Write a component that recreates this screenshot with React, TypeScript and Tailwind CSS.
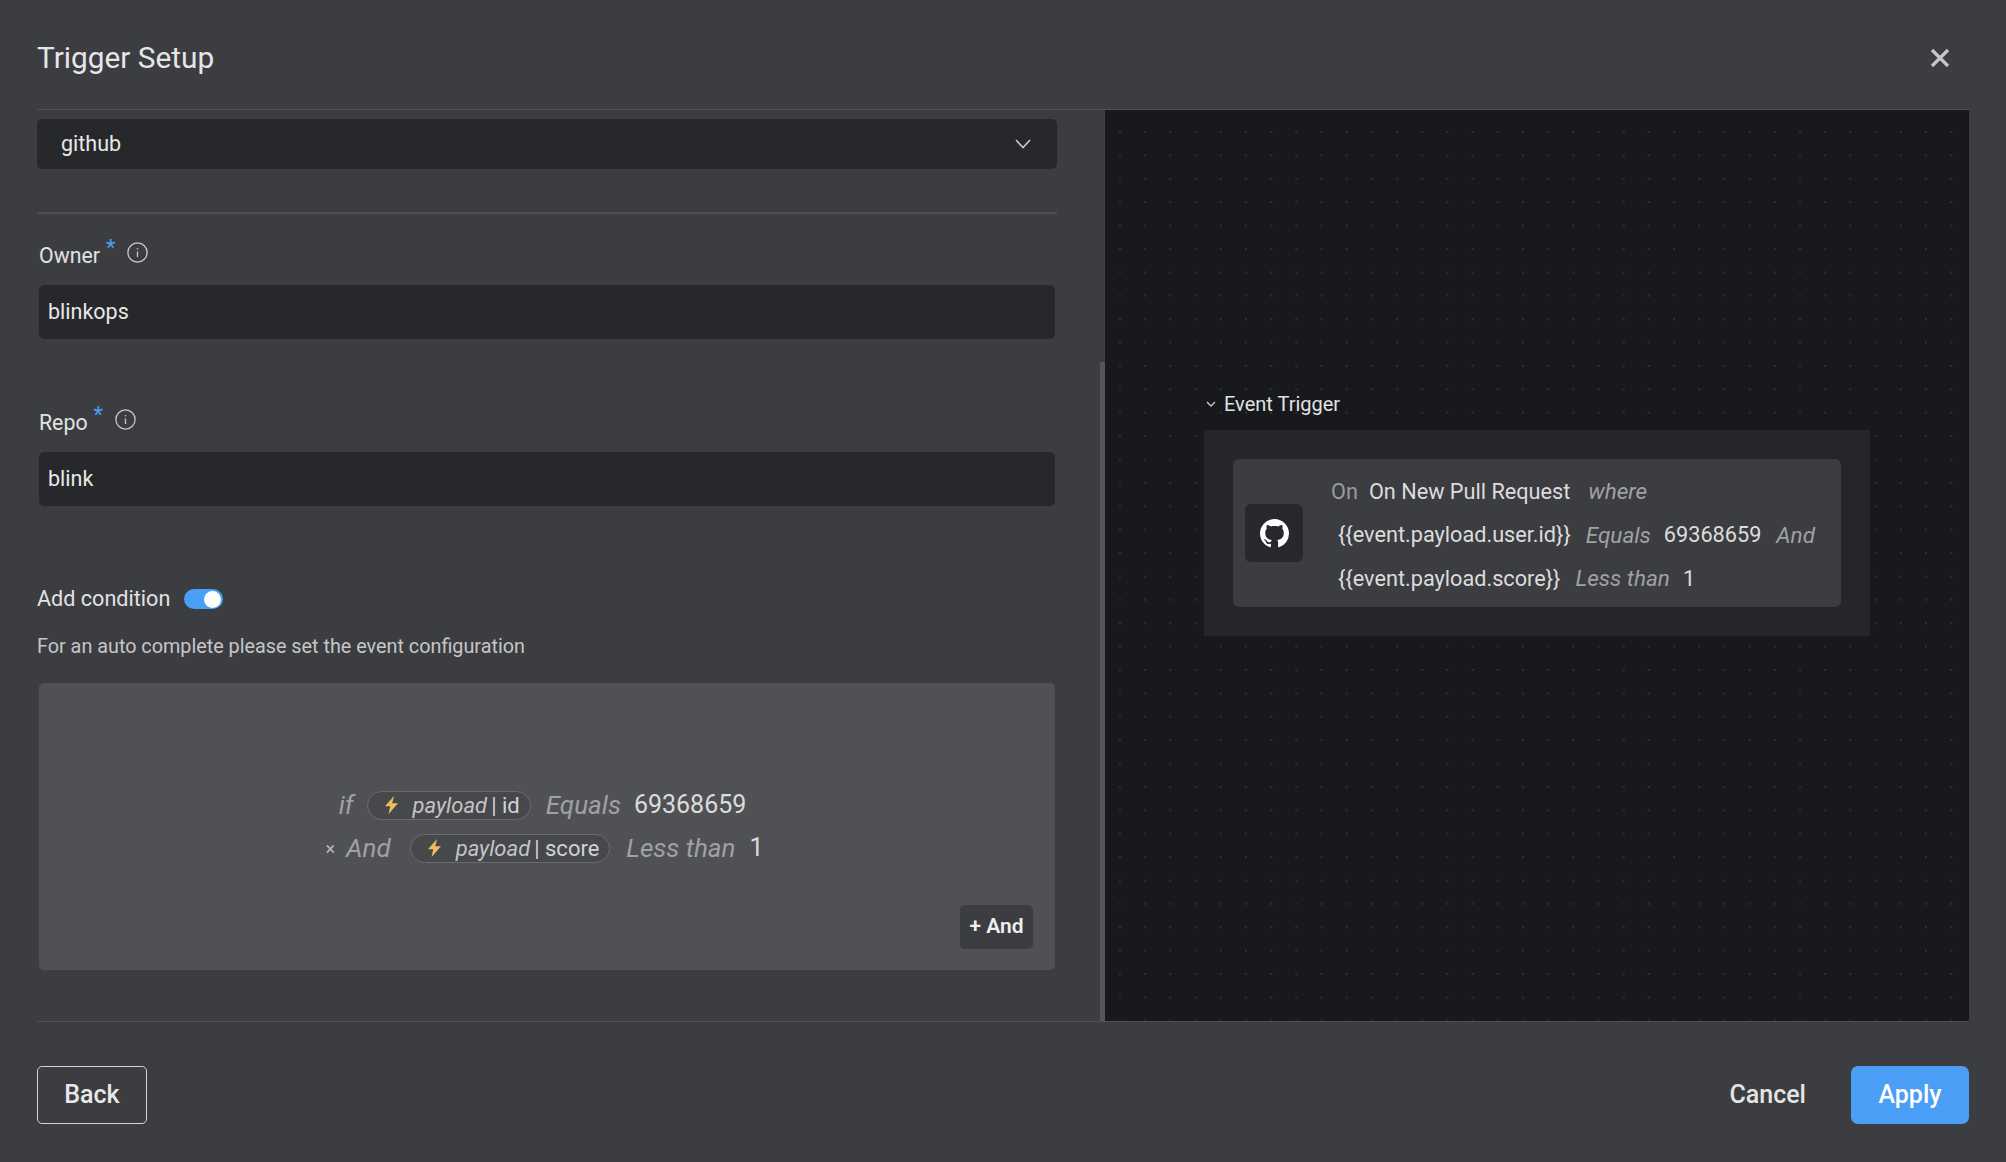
import * as React from "react";

const GITHUB_MARK =
  "M8 0C3.58 0 0 3.58 0 8c0 3.54 2.29 6.53 5.47 7.59.4.07.55-.17.55-.38 0-.19-.01-.82-.01-1.49-2.01.37-2.53-.49-2.69-.94-.09-.23-.48-.94-.82-1.13-.28-.15-.68-.52-.01-.53.63-.01 1.08.58 1.23.82.72 1.21 1.87.87 2.33.66.07-.52.28-.87.51-1.07-1.78-.2-3.64-.89-3.64-3.95 0-.87.31-1.59.82-2.15-.08-.2-.36-1.02.08-2.12 0 0 .67-.21 2.2.82.64-.18 1.32-.27 2-.27.68 0 1.36.09 2 .27 1.53-1.04 2.2-.82 2.2-.82.44 1.1.16 1.92.08 2.12.51.56.82 1.27.82 2.15 0 3.07-1.87 3.75-3.65 3.95.29.25.54.73.54 1.48 0 1.07-.01 1.93-.01 2.2 0 .21.15.46.55.38A8.013 8.013 0 0016 8c0-4.42-3.58-8-8-8z";

const InfoIcon: React.FC = () => (
  <svg width="21" height="21" viewBox="0 0 21 21" fill="none" stroke="#c9c9cb" strokeWidth="1.3">
    <circle cx="10.5" cy="10.5" r="9.6" />
    <path d="M10.5 9.5v5.5" />
    <path d="M10.5 6v1.4" />
  </svg>
);

const Bolt: React.FC = () => (
  <svg width="15" height="18" viewBox="0 0 15 18" fill="#eebd62">
    <path d="M10 0 1 10.2h5.2L4.6 18 14 7.2H8.2z" />
  </svg>
);

const FieldLabel: React.FC<{ label: string }> = ({ label }) => (
  <div className="flex h-[30px] items-center pl-[2px]">
    <span className="mt-[2px] text-[21.3px] text-[#e2e2e3]">{label}</span>
    <span className="ml-[6px] -mt-[15px] text-[22px] leading-none text-[#4b9ef5]">*</span>
    <span className="ml-[12px] -mt-[5px]">
      <InfoIcon />
    </span>
  </div>
);

const TextField: React.FC<{ value: string }> = ({ value }) => (
  <div className="mx-[2px] flex h-[54px] items-center rounded-[5px] bg-[#27282c] px-[9px] text-[21.5px] text-[#e8e8e9]">
    {value}
  </div>
);

const ParamPill: React.FC<{ field: string }> = ({ field }) => (
  <span className="flex h-[29px] items-center rounded-full border border-[#6a6b6f] bg-[#47484c] pl-[16px] pr-[10px] text-[22px]">
    <Bolt />
    <span className="ml-[14px] italic text-[#c4c4c6]">payload</span>
    <span className="ml-[4px] text-[#d2d2d4]">| {field}</span>
  </span>
);

const Muted: React.FC<{ className?: string; children: React.ReactNode }> = ({ className, children }) => (
  <span className={`italic text-[#a0a1a4] ${className ?? ""}`}>{children}</span>
);

const ConditionBuilder: React.FC = () => (
  <div className="relative mx-[2px] flex h-[287px] flex-col justify-center rounded-[5px] bg-[#505155]">
    <div className="flex h-[43px] items-center justify-center pr-[9px] text-[25px] text-[#dcdcdd]">
      <Muted className="text-[26px]">if</Muted>
      <span className="ml-[13px]">
        <ParamPill field="id" />
      </span>
      <Muted className="ml-[15px] text-[26px]">Equals</Muted>
      <span className="ml-[13px]">69368659</span>
    </div>
    <div className="flex h-[43px] items-center justify-center pr-[5px] text-[25px] text-[#dcdcdd]">
      <span className="text-[18px] text-[#b4b4b6]">×</span>
      <Muted className="ml-[11px] text-[26px]">And</Muted>
      <span className="ml-[19px]">
        <ParamPill field="score" />
      </span>
      <Muted className="ml-[16px] text-[26px]">Less than</Muted>
      <span className="ml-[14px]">1</span>
    </div>
    <button className="absolute bottom-[21px] right-[22px] h-[44px] w-[73px] rounded-[5px] bg-[#3c3d41] text-[21px] font-semibold text-[#eeeeef]">
      + And
    </button>
  </div>
);

const FormColumn: React.FC = () => (
  <div className="flex w-[1100px] flex-col pl-[37px] pr-[43px] pt-[9px]">
    <div className="flex h-[50px] items-center justify-between rounded-[5px] bg-[#27282c] pl-[24px] pr-[26px] text-[21.5px] text-[#e8e8e9]">
      github
      <svg width="16" height="10" viewBox="0 0 16 10" fill="none" stroke="#c9c9cb" strokeWidth="1.6">
        <path d="M1 1l7 7.5L15 1" />
      </svg>
    </div>
    <div className="mt-[43px] h-[2px] bg-[#4d4e52]" />
    <div className="mt-[26px]">
      <FieldLabel label="Owner" />
      <div className="mt-[15px]">
        <TextField value="blinkops" />
      </div>
    </div>
    <div className="mt-[68px]">
      <FieldLabel label="Repo" />
      <div className="mt-[15px]">
        <TextField value="blink" />
      </div>
    </div>
    <div className="mt-[78px] flex h-[30px] items-center">
      <span className="text-[21.6px] text-[#e2e2e3]">Add condition</span>
      <span className="ml-[14px] flex h-[20px] w-[39px] items-center justify-end rounded-full bg-[#4b9ef5] pr-[2px]">
        <span className="h-[17px] w-[17px] rounded-full bg-white" />
      </span>
    </div>
    <p className="mt-[19px] h-[28px] text-[19.8px] leading-[28px] text-[#c6c6c8]">
      For an auto complete please set the event configuration
    </p>
    <div className="mt-[22px]">
      <ConditionBuilder />
    </div>
  </div>
);

const TriggerCard: React.FC = () => (
  <div className="flex h-[148px] items-center rounded-[6px] bg-[#3c3d41] pl-[12px] text-[21.7px] text-[#dcdcdd]">
    <div className="flex h-[58px] w-[58px] items-center justify-center rounded-[6px] bg-[#27282c]">
      <svg width="29" height="29" viewBox="0 0 16 16" fill="#ffffff">
        <path d={GITHUB_MARK} />
      </svg>
    </div>
    <div className="ml-[28px] flex flex-col pt-[5px]">
      <div className="flex h-[43.5px] items-center">
        <span className="text-[#9a9b9e]">On</span>
        <span className="ml-[11px]">On New Pull Request</span>
        <Muted className="ml-[18px] text-[22.5px]">where</Muted>
      </div>
      <div className="ml-[7px] flex h-[43.5px] items-center">
        <span>{"{{event.payload.user.id}}"}</span>
        <Muted className="ml-[15px] text-[22.5px]">Equals</Muted>
        <span className="ml-[13px]">69368659</span>
        <Muted className="ml-[15px] text-[22.5px]">And</Muted>
      </div>
      <div className="ml-[7px] flex h-[43.5px] items-center">
        <span>{"{{event.payload.score}}"}</span>
        <Muted className="ml-[15px] text-[22.5px]">Less than</Muted>
        <span className="ml-[13px]">1</span>
      </div>
    </div>
  </div>
);

const CanvasPanel: React.FC = () => (
  <div className="flex flex-1 flex-col bg-[#18191e] bg-[radial-gradient(circle,#2f3035_1px,transparent_1.2px)] bg-[length:25.2px_23.4px] bg-[position:2.4px_10.3px] pl-[99px] pr-[99px] pt-[279px]">
    <div className="flex h-[30px] items-center pl-[2px] text-[20px] text-[#e2e2e3]">
      <svg width="10" height="7" viewBox="0 0 10 7" fill="none" stroke="#c9c9cb" strokeWidth="1.4">
        <path d="M1 1l4 4 4-4" />
      </svg>
      <span className="ml-[8px]">Event Trigger</span>
    </div>
    <div className="mt-[11px] h-[206px] bg-[#27282ce0] p-[29px]">
      <TriggerCard />
    </div>
  </div>
);

export default function App() {
  return (
    <div className="flex h-[1162px] w-[2006px] flex-col overflow-hidden bg-[#3c3d41] [font-family:Roboto,sans-serif]">
      <header className="mx-[37px] flex h-[110px] items-center justify-between border-b border-[#4f5054] pt-[7px]">
        <h1 className="text-[29.8px] text-[#e6e6e7]">Trigger Setup</h1>
        <svg className="mr-[19px]" width="20" height="20" viewBox="0 0 20 20" stroke="#c6c6c8" strokeWidth="3.2">
          <path d="M2 2l16 16M18 2L2 18" />
        </svg>
      </header>

      <main className="mr-[37px] flex h-[911px]">
        <FormColumn />
        <div className="flex w-[5px] flex-col pt-[252px]">
          <div className="flex-1 bg-[#55565a]" />
        </div>
        <CanvasPanel />
      </main>

      <footer className="mx-[37px] flex flex-1 items-start justify-between border-t border-[#4f5054] pt-[44px]">
        <button className="h-[58px] w-[110px] rounded-[5px] border border-[#d4d4d6] text-[25px] font-medium text-[#e8e8e9]">
          Back
        </button>
        <div className="flex items-center">
          <button className="text-[25px] font-medium text-[#e4e4e5]">Cancel</button>
          <button className="ml-[45px] h-[58px] w-[118px] rounded-[7px] bg-[#4b9ef5] text-[25px] font-medium text-white">
            Apply
          </button>
        </div>
      </footer>
    </div>
  );
}
